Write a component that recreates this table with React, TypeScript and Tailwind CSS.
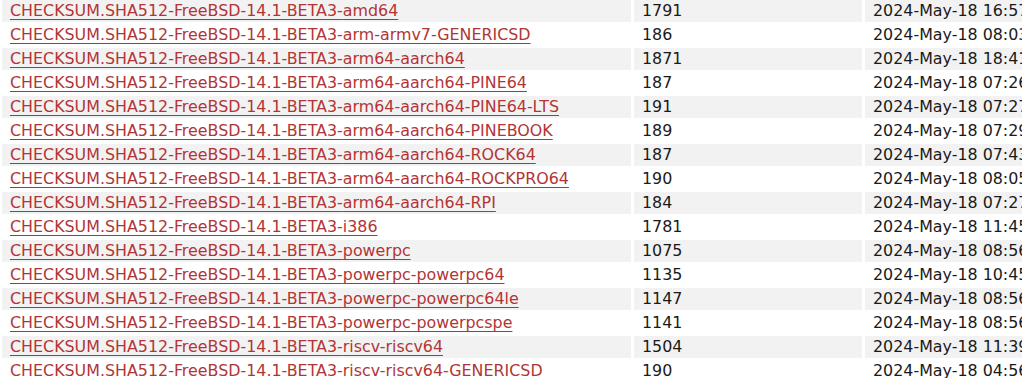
const rows: [string, string, string][] = [
  ['amd64', '1791', '2024-May-18 16:57:38'],
  ['arm-armv7-GENERICSD', '186', '2024-May-18 08:03:12'],
  ['arm64-aarch64', '1871', '2024-May-18 18:41:05'],
  ['arm64-aarch64-PINE64', '187', '2024-May-18 07:26:44'],
  ['arm64-aarch64-PINE64-LTS', '191', '2024-May-18 07:27:51'],
  ['arm64-aarch64-PINEBOOK', '189', '2024-May-18 07:29:02'],
  ['arm64-aarch64-ROCK64', '187', '2024-May-18 07:43:19'],
  ['arm64-aarch64-ROCKPRO64', '190', '2024-May-18 08:05:27'],
  ['arm64-aarch64-RPI', '184', '2024-May-18 07:27:33'],
  ['i386', '1781', '2024-May-18 11:45:10'],
  ['powerpc', '1075', '2024-May-18 08:56:21'],
  ['powerpc-powerpc64', '1135', '2024-May-18 10:45:48'],
  ['powerpc-powerpc64le', '1147', '2024-May-18 08:56:40'],
  ['powerpc-powerpcspe', '1141', '2024-May-18 08:56:55'],
  ['riscv-riscv64', '1504', '2024-May-18 11:39:14'],
  ['riscv-riscv64-GENERICSD', '190', '2024-May-18 04:56:08'],
];

export default function App() {
  return (
    <div className="h-[378px] w-[1022px] overflow-hidden bg-white font-['DejaVu_Sans',sans-serif] text-[15.88px] text-[#1a1a1a]">
      <div className="flex flex-col gap-[2px] pl-[2px]">
        {rows.map(([name, size, date], i) => {
          const bg = i % 2 === 0 ? 'bg-[#f2f2f2]' : 'bg-white';
          return (
            <div key={name} className="flex h-[22px] gap-[3px] leading-[22px]">
              <div className={`w-[629px] shrink-0 whitespace-nowrap px-2 ${bg}`}>
                <a href="#" className="text-[#b23535] underline decoration-1 underline-offset-[3px]">
                  CHECKSUM.SHA512-FreeBSD-14.1-BETA3-{name}
                </a>
              </div>
              <div className={`w-[228px] shrink-0 px-2 ${bg}`}>{size}</div>
              <div className={`w-[260px] shrink-0 whitespace-nowrap px-2 ${bg}`}>{date}</div>
            </div>
          );
        })}
      </div>
    </div>
  );
}
